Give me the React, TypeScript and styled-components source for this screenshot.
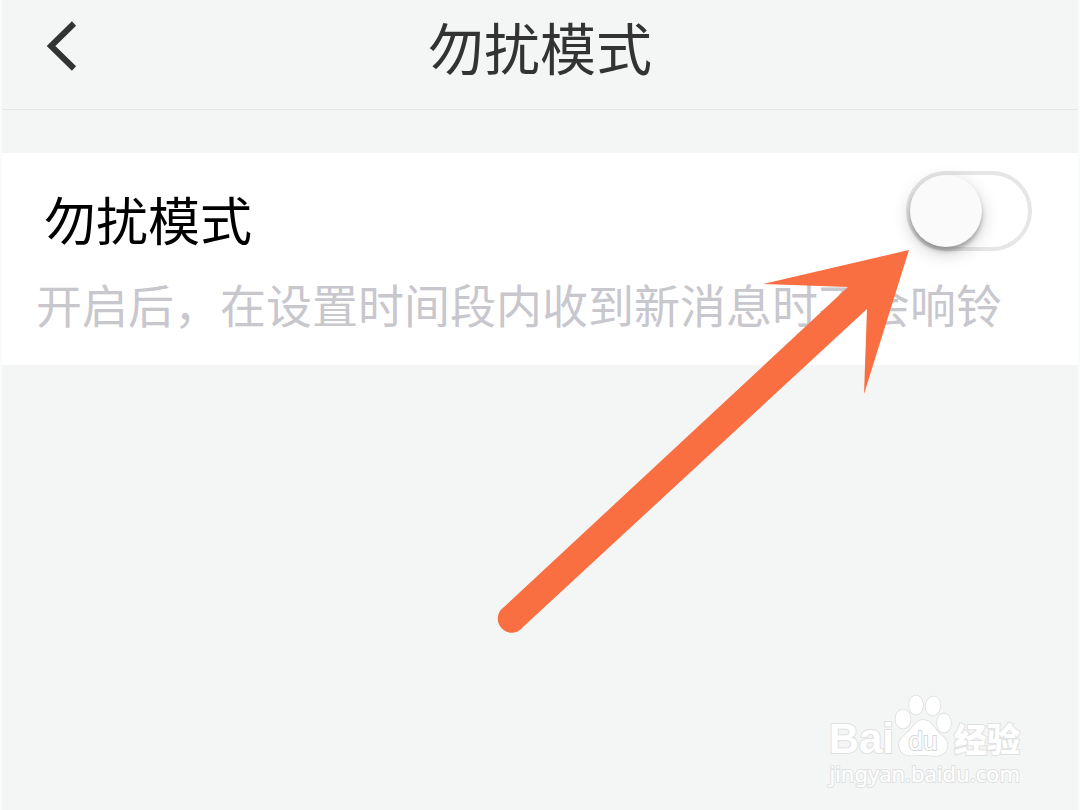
import React, { useState } from "react";
import styled, { createGlobalStyle } from "styled-components";

const GlobalStyle = createGlobalStyle`
  *, *::before, *::after { box-sizing: border-box; }
  body {
    margin: 0;
    background: #f4f6f6;
    font-family: "Noto Sans CJK SC", "Noto Sans", sans-serif;
  }
`;

const Page = styled.div`
  display: flex;
  flex-direction: column;
  min-height: 100vh;
  border: solid #fafbfb;
  border-width: 0 2px;
  overflow: hidden;
`;

const Header = styled.header`
  display: grid;
  grid-template-columns: 120px 1fr 120px;
  align-items: center;
  height: 110px;
  padding-bottom: 18px;
  border-bottom: 1px solid #e6e8e8;
`;

const BackButton = styled.button`
  display: flex;
  align-items: center;
  height: 64px;
  padding: 0 0 0 44px;
  border: 0;
  background: none;
  cursor: pointer;
`;

const Title = styled.h1`
  margin: 0;
  color: #333;
  font-size: 56px;
  font-weight: 400;
  line-height: 80px;
  text-align: center;
`;

const Card = styled.section`
  position: relative;
  margin-top: 43px;
  padding: 18px 46px 30px 34px;
  background: #fff;
`;

const SettingRow = styled.div`
  display: flex;
  justify-content: space-between;
  align-items: flex-start;
  height: 100px;
`;

const SettingLabel = styled.label`
  padding: 10px 0 0 8px;
  color: #000;
  font-size: 52px;
  line-height: 76px;
`;

const Switch = styled.input`
  appearance: none;
  flex: none;
  width: 126px;
  height: 80px;
  margin: 0;
  padding: 0;
  border: 4px solid #e6e6e6;
  border-radius: 40px;
  background: #fff;
  cursor: pointer;

  &::before {
    content: "";
    display: block;
    width: 72px;
    height: 72px;
    border-radius: 50%;
    background: #fafafa;
    box-shadow: 0 4px 4px rgba(0, 0, 0, 0.26), 0 6px 18px rgba(0, 0, 0, 0.2);
  }

  &:checked {
    background: #4cd964;
  }

  &:checked::before {
    margin-left: auto;
  }
`;

const Description = styled.p`
  margin: 0;
  color: #c8c7cd;
  font-size: 46px;
  line-height: 64px;
  white-space: nowrap;
`;

const Pointer = styled.svg`
  position: absolute;
  top: 96px;
  right: 167px;
  width: 414px;
  height: 386px;
  overflow: visible;
  pointer-events: none;
`;

const Watermark = styled.footer`
  display: flex;
  flex-direction: column;
  align-items: flex-end;
  margin-top: auto;
  padding: 0 58px 22px 0;
  color: #fff;
  font-family: "Liberation Sans", "Noto Sans CJK SC", sans-serif;
  -webkit-text-stroke: 2px #dfe1e1;
  paint-order: stroke fill;
`;

const Brand = styled.div`
  display: flex;
  align-items: flex-end;
  height: 64px;
`;

const Latin = styled.span`
  font-size: 42px;
  font-weight: 700;
  line-height: 38px;
`;

const Chinese = styled.span`
  margin-left: 2px;
  font-family: "Noto Sans CJK SC", sans-serif;
  font-size: 33px;
  font-weight: 900;
  line-height: 40px;
`;

const Site = styled.span`
  font-family: "Noto Sans", sans-serif;
  font-size: 22px;
  line-height: 30px;
`;

function BackIcon() {
  return (
    <svg width="32" height="50" viewBox="0 0 32 50" aria-hidden="true">
      <path d="M28 2.5 L5 25 L28 47.5" fill="none" stroke="#333" strokeWidth="6" />
    </svg>
  );
}

function Paw() {
  return (
    <svg width="58" height="64" viewBox="0 0 58 64" role="img" aria-label="du">
      <g fill="#fff" stroke="#dcdede" strokeWidth="1.5">
        <ellipse cx="9" cy="25" rx="7.5" ry="9.5" />
        <ellipse cx="22" cy="11" rx="7" ry="9.5" />
        <ellipse cx="39" cy="12" rx="7.5" ry="9.5" transform="rotate(8 39 12)" />
        <ellipse cx="50" cy="29" rx="7" ry="9.5" />
        <path d="M29 26 C21 26 19 35 12 40 C5 45 3 51 7 57 C12 64 21 61 29 61 C38 61 46 64 51 58 C56 51 53 45 46 40 C40 35 38 26 29 26 Z" />
      </g>
      <text
        x="29"
        y="56"
        textAnchor="middle"
        fontFamily="Liberation Sans, sans-serif"
        fontSize="26"
        fill="#fff"
        stroke="#d6d8d8"
        strokeWidth="2"
      >
        du
      </text>
    </svg>
  );
}

export default function App() {
  const [quiet, setQuiet] = useState(false);

  return (
    <>
      <GlobalStyle />
      <Page>
        <Header>
          <BackButton type="button" aria-label="返回">
            <BackIcon />
          </BackButton>
          <Title>勿扰模式</Title>
        </Header>
        <Card>
          <SettingRow>
            <SettingLabel htmlFor="quiet-mode">勿扰模式</SettingLabel>
            <Switch
              id="quiet-mode"
              type="checkbox"
              role="switch"
              checked={quiet}
              onChange={(event) => setQuiet(event.target.checked)}
            />
          </SettingRow>
          <Description>开启后，在设置时间段内收到新消息时不会响铃</Description>
          <Pointer viewBox="0 0 414 386" aria-hidden="true">
            <path
              d="M412 1 L266 35 L351 38 L7 358 A14 14 0 1 0 26 378 L370 60 L367 145 Z"
              fill="#fa6f42"
            />
          </Pointer>
        </Card>
        <Watermark>
          <Brand>
            <Latin>Bai</Latin>
            <Paw />
            <Chinese>经验</Chinese>
          </Brand>
          <Site>jingyan.baidu.com</Site>
        </Watermark>
      </Page>
    </>
  );
}
